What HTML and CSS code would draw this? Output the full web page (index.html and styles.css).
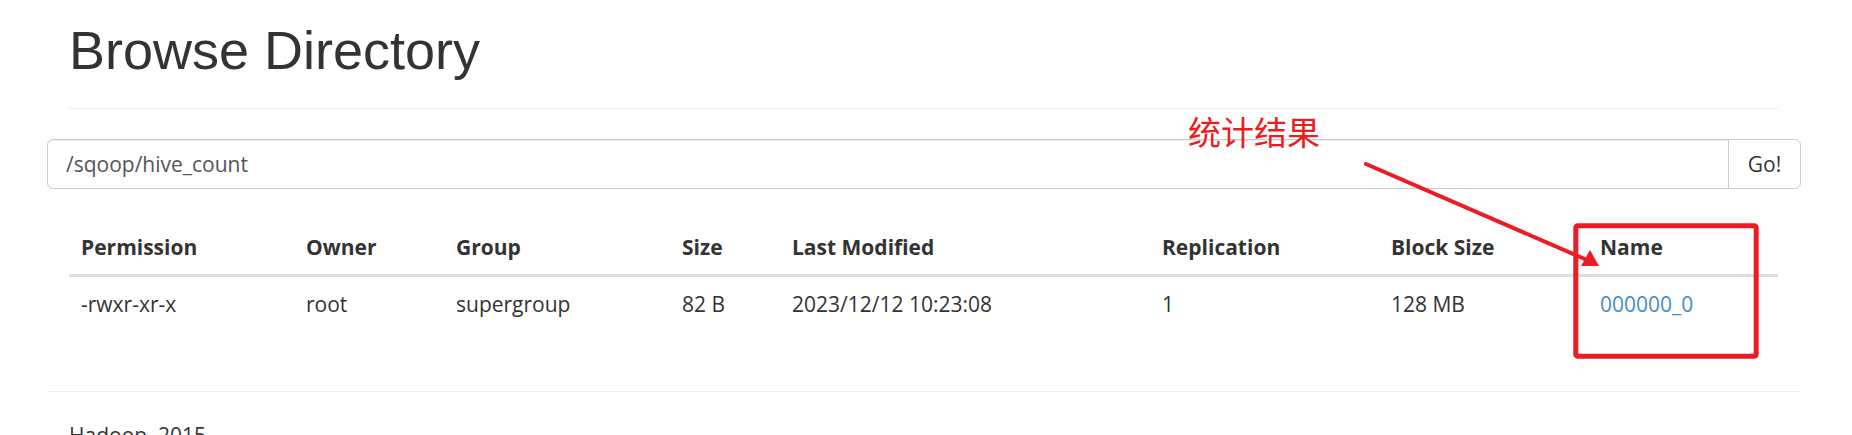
FILE: index.html
```html
<!DOCTYPE html>
<html lang="en">
<head>
<meta charset="utf-8">
<title>Browse Directory</title>
<link rel="stylesheet" href="styles.css">
</head>
<body>
<div class="container">
  <div class="col">
    <div class="page-header">
      <h1>Browse Directory</h1>
    </div>
  </div>
  <form class="input-group" onsubmit="return false">
    <input class="form-control" type="text" value="/sqoop/hive_count">
    <button class="btn" type="button">Go!</button>
  </form>
  <div class="col">
    <table class="table">
      <thead>
        <tr>
          <th class="c-perm">Permission</th>
          <th class="c-owner">Owner</th>
          <th class="c-group">Group</th>
          <th class="c-size">Size</th>
          <th class="c-mod">Last Modified</th>
          <th class="c-rep">Replication</th>
          <th class="c-block">Block Size</th>
          <th class="c-name">Name</th>
        </tr>
      </thead>
      <tbody>
        <tr>
          <td>-rwxr-xr-x</td>
          <td>root</td>
          <td>supergroup</td>
          <td>82 B</td>
          <td>2023/12/12 10:23:08</td>
          <td>1</td>
          <td>128 MB</td>
          <td><a href="#" class="file-link">000000_0</a></td>
        </tr>
      </tbody>
    </table>
  </div>
  <hr class="footer-rule">
  <div class="col">
    <p class="footer-text">Hadoop, 2015.</p>
  </div>
</div>

<div class="note-label">统计结果</div>
<svg class="note-marks" width="1852" height="435" viewBox="0 0 1852 435" xmlns="http://www.w3.org/2000/svg">
  <line x1="1366" y1="164" x2="1587" y2="260" stroke="#ec1c24" stroke-width="4" stroke-linecap="round"/>
  <polygon points="1599,266 1581,266 1590,250" fill="#ec1c24"/>
  <rect x="1575.8" y="225.8" width="180.4" height="130.4" rx="2" fill="none" stroke="#ec1c24" stroke-width="5"/>
</svg>
</body>
</html>
```

FILE: styles.css
```css
html, body {
  margin: 0;
  padding: 0;
  background: #fff;
}

body {
  font-family: "Open Sans", "Noto Sans", "Liberation Sans", sans-serif;
  font-size: 21px;
  line-height: 30px;
  color: #333;
  position: relative;
  overflow: hidden;
  height: 435px;
}

.container {
  padding: 0 51px 0 47px;
}

.col {
  padding: 0 23px 0 22px;
}

.page-header {
  margin-top: 21px;
  padding-bottom: 28px;
  border-bottom: 1px solid #eee;
}

.page-header h1 {
  margin: 0;
  font-family: "Liberation Sans", Arial, sans-serif;
  font-size: 54px;
  line-height: 59px;
  font-weight: normal;
  color: #333;
}

.input-group {
  margin: 30px 0 0;
  display: flex;
  height: 50px;
}

.form-control {
  flex: 1;
  min-width: 0;
  box-sizing: border-box;
  height: 50px;
  margin: 0;
  padding: 0 18px;
  border: 1px solid #ccc;
  border-radius: 6px 0 0 6px;
  box-shadow: inset 0 1px 1px rgba(0, 0, 0, 0.075);
  font-family: inherit;
  font-size: 21px;
  color: #555;
  background: #fff;
  outline: none;
}

.btn {
  width: 73px;
  box-sizing: border-box;
  height: 50px;
  margin: 0 0 0 -1px;
  padding: 0;
  border: 1px solid #ccc;
  border-radius: 0 6px 6px 0;
  background: #fff;
  font-family: inherit;
  font-size: 21px;
  color: #333;
}

.table {
  width: 100%;
  margin: 31px 0 0;
  table-layout: fixed;
  border-collapse: separate;
  border-spacing: 0;
}

.table th,
.table td {
  padding: 12px;
  line-height: 30px;
  text-align: left;
  vertical-align: top;
  white-space: nowrap;
}

.table th {
  font-weight: bold;
  border-bottom: 3px solid #ddd;
}

.c-perm { width: 201px; }
.c-owner { width: 126px; }
.c-group { width: 202px; }
.c-size { width: 86px; }
.c-mod { width: 346px; }
.c-rep { width: 205px; }
.c-block { width: 185px; }
.c-name { width: 166px; }

.file-link {
  color: #428bca;
  text-decoration: none;
}

.footer-rule {
  margin: 60px 0 0;
  border: 0;
  border-top: 1px solid #eee;
  height: 0;
}

.footer-text {
  margin: 28px 0 0;
}

.note-label {
  position: absolute;
  left: 1188px;
  top: 115px;
  font-family: "Noto Sans CJK SC", sans-serif;
  font-size: 33px;
  line-height: 33px;
  color: #ec1c24;
  white-space: nowrap;
}

.note-marks {
  position: absolute;
  left: 0;
  top: 0;
  pointer-events: none;
}
```
